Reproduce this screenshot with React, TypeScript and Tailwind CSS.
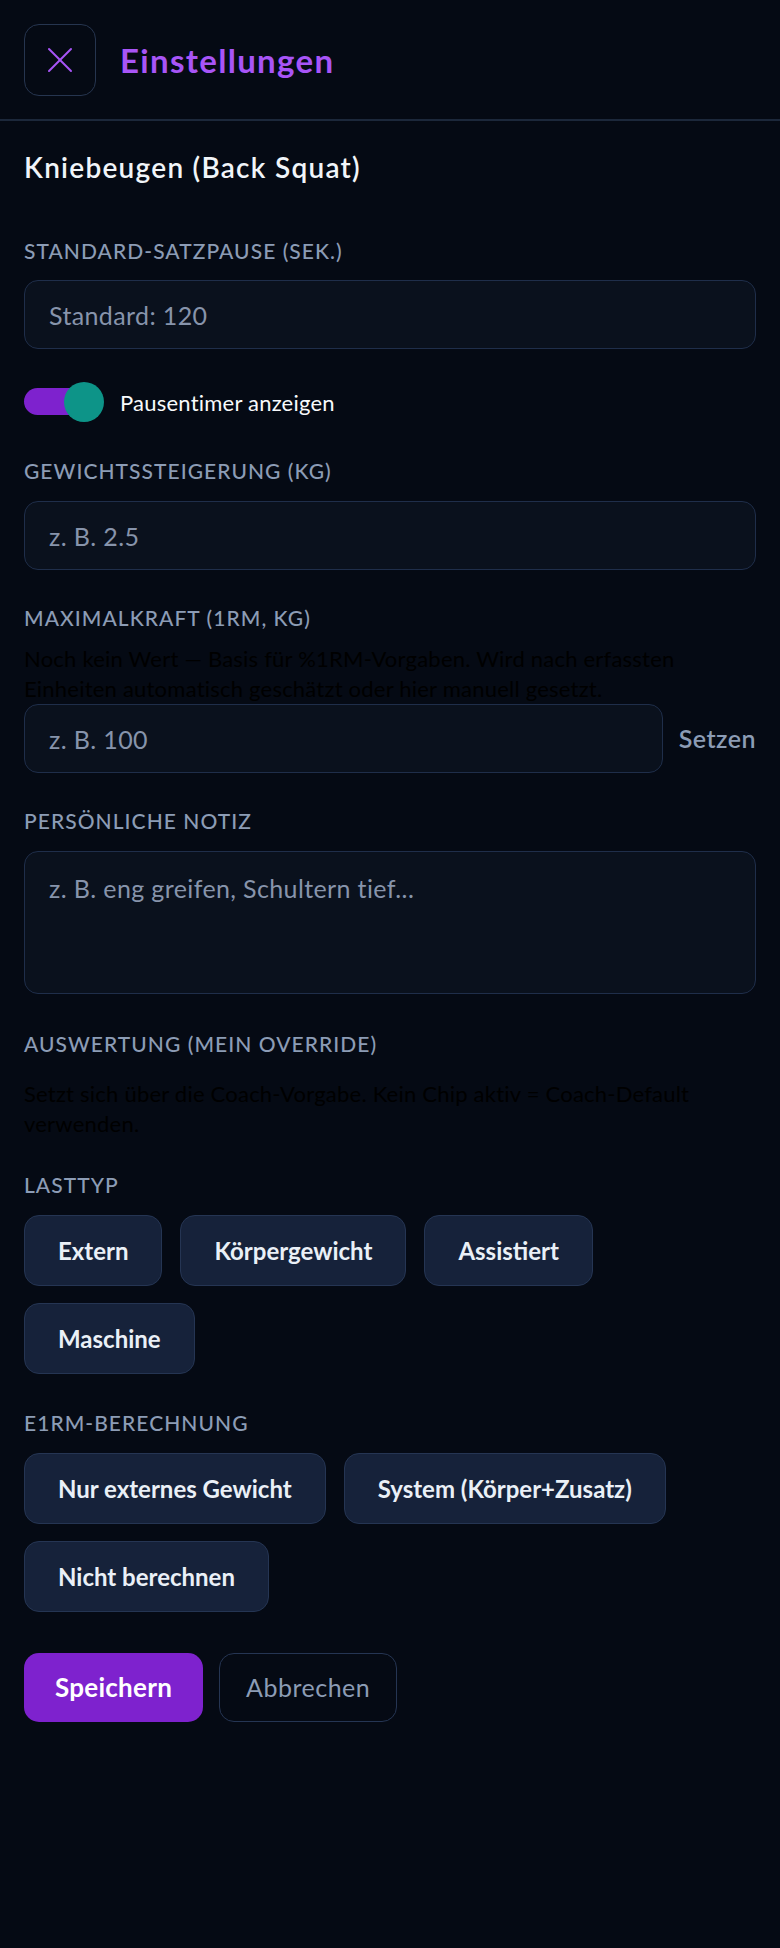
import React, { useState } from 'react';

type ChipProps = {
  label: string;
  active?: boolean;
  onClick?: () => void;
};

const Chip: React.FC<ChipProps> = ({ label, active, onClick }) => (
  <button
    type="button"
    onClick={onClick}
    className={
      active
        ? 'h-[71px] rounded-[15px] border border-[#7e22ce] bg-[#7e22ce] px-[33px] text-[24px] font-bold text-white'
        : 'h-[71px] rounded-[15px] border border-[#253553] bg-[#16223a] px-[33px] text-[24px] font-bold text-[#eaf0f7]'
    }
  >
    {label}
  </button>
);

const FieldLabel: React.FC<{ children: React.ReactNode }> = ({ children }) => (
  <div className="text-[21px] leading-[24px] font-medium tracking-[0.05em] text-[#8c9cb5] uppercase">{children}</div>
);

const inputClass =
  'h-[69px] w-full rounded-[14px] border border-[#1f2e4a] bg-[#0a111d] px-6 text-[25px] tracking-[0.015em] text-[#e2e8f0] outline-none placeholder:text-[#8794ab]';

export default function App() {
  const [showTimer, setShowTimer] = useState(true);
  const [loadType, setLoadType] = useState<string | null>(null);
  const [e1rmMode, setE1rmMode] = useState<string | null>(null);

  return (
    <div className="min-h-screen bg-[#050a14] font-['Lato',sans-serif] text-[#f1f5f9]">
      {/* top bar */}
      <header className="flex h-[121px] items-center gap-6 border-b-2 border-[#1c283b] px-6">
        <button
          type="button"
          className="flex h-[72px] w-[72px] items-center justify-center rounded-[15px] border border-[#26354f]"
        >
          <svg width="26" height="26" viewBox="0 0 26 26" fill="none" stroke="#a855f7" strokeWidth="2" strokeLinecap="round">
            <path d="M2 2 L24 24" />
            <path d="M24 2 L2 24" />
          </svg>
        </button>
        <h1 className="pt-[3px] text-[33px] font-bold tracking-[0.04em] text-[#a855f7]">Einstellungen</h1>
      </header>

      <main className="flex flex-col px-6 pt-[25px]">
        <h2 className="text-[28px] leading-[42px] font-semibold tracking-[0.045em] text-[#f1f5f9]">
          Kniebeugen (Back Squat)
        </h2>

        {/* rest timer */}
        <section className="mt-[51px]">
          <FieldLabel>Standard-Satzpause (Sek.)</FieldLabel>
          <input className={`${inputClass} mt-[17px]`} placeholder="Standard: 120" />
          <label className="mt-[33px] flex h-[40px] items-center gap-4">
            <span className="relative h-[40px] w-[80px]" onClick={() => setShowTimer(!showTimer)}>
              <span className="absolute top-[6px] left-0 h-[27px] w-[60px] rounded-full bg-[#7e22ce]" />
              <span
                className={
                  showTimer
                    ? 'absolute top-0 right-0 h-[40px] w-[40px] rounded-full bg-[#0d9488]'
                    : 'absolute top-0 left-0 h-[40px] w-[40px] rounded-full bg-[#64748b]'
                }
              />
            </span>
            <span className="text-[22px] tracking-[0.01em] text-[#f8fafc]">Pausentimer anzeigen</span>
          </label>
        </section>

        {/* increment */}
        <section className="mt-[37px]">
          <FieldLabel>Gewichtssteigerung (kg)</FieldLabel>
          <input className={`${inputClass} mt-[18px]`} placeholder="z. B. 2.5" />
        </section>

        {/* 1RM */}
        <section className="mt-[36px]">
          <FieldLabel>Maximalkraft (1RM, kg)</FieldLabel>
          <p className="mt-[14px] text-[22px] leading-[30px] tracking-[0.01em] text-black">
            Noch kein Wert — Basis für %1RM-Vorgaben. Wird nach erfassten Einheiten automatisch geschätzt oder hier manuell
            gesetzt.
          </p>
          <div className="flex items-center gap-4">
            <input className={`${inputClass} flex-1`} placeholder="z. B. 100" />
            <button type="button" className="text-[25px] font-semibold tracking-[0.02em] text-[#8c9cb5]">
              Setzen
            </button>
          </div>
        </section>

        {/* note */}
        <section className="mt-[36px]">
          <FieldLabel>Persönliche Notiz</FieldLabel>
          <textarea
            className="mt-[18px] block h-[143px] w-full resize-none rounded-[14px] border border-[#1f2e4a] bg-[#0a111d] px-6 py-[18px] text-[25px] leading-[36px] tracking-[0.015em] text-[#e2e8f0] outline-none placeholder:text-[#8794ab]"
            placeholder="z. B. eng greifen, Schultern tief..."
          />
        </section>

        {/* evaluation override */}
        <section className="mt-[38px]">
          <FieldLabel>Auswertung (mein Override)</FieldLabel>
          <p className="mt-[23px] text-[22px] leading-[30px] tracking-[0.01em] text-black">
            Setzt sich über die Coach-Vorgabe. Kein Chip aktiv = Coach-Default verwenden.
          </p>
        </section>

        <section className="mt-[34px]">
          <FieldLabel>Lasttyp</FieldLabel>
          <div className="mt-[18px] flex flex-wrap gap-x-[18px] gap-y-[17px]">
            {['Extern', 'Körpergewicht', 'Assistiert', 'Maschine'].map((t) => (
              <Chip key={t} label={t} active={loadType === t} onClick={() => setLoadType(loadType === t ? null : t)} />
            ))}
          </div>
        </section>

        <section className="mt-[37px]">
          <FieldLabel>e1RM-Berechnung</FieldLabel>
          <div className="mt-[18px] flex flex-wrap gap-x-[18px] gap-y-[17px]">
            {['Nur externes Gewicht', 'System (Körper+Zusatz)', 'Nicht berechnen'].map((t) => (
              <Chip key={t} label={t} active={e1rmMode === t} onClick={() => setE1rmMode(e1rmMode === t ? null : t)} />
            ))}
          </div>
        </section>

        {/* actions */}
        <div className="mt-[41px] flex gap-4 pb-10">
          <button
            type="button"
            className="h-[69px] rounded-[15px] bg-[#7e22ce] px-[31px] text-[26px] font-bold tracking-[0.01em] text-white"
          >
            Speichern
          </button>
          <button
            type="button"
            className="h-[69px] rounded-[15px] border border-[#253553] px-[26px] text-[25px] tracking-[0.02em] text-[#8c9cb5]"
          >
            Abbrechen
          </button>
        </div>
      </main>
    </div>
  );
}
